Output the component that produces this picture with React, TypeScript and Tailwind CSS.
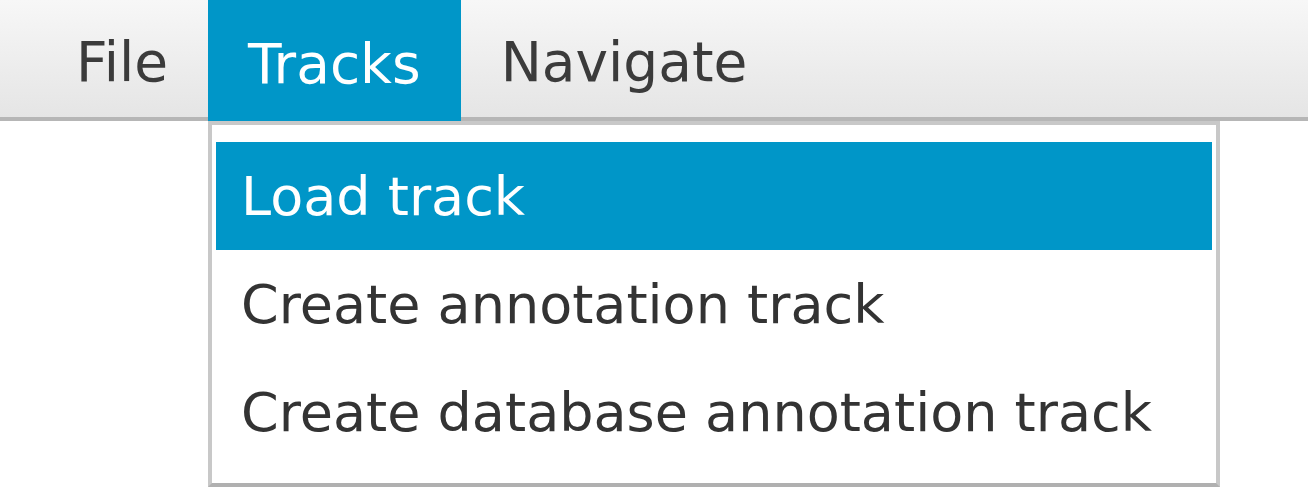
import React from "react";

const menus = ["File", "Tracks", "Navigate"];
const trackItems = [
  "Load track",
  "Create annotation track",
  "Create database annotation track",
];

const App: React.FC = () => {
  return (
    <div
      className="relative w-[1308px] h-[487px] bg-white overflow-hidden"
      style={{ fontFamily: '"DejaVu Sans", "Liberation Sans", sans-serif' }}
    >
      <div className="flex h-[121px] pl-[36px] bg-gradient-to-b from-[#f7f7f7] to-[#e5e5e5] border-b-4 border-[#b6b6b6]">
        {menus.map((m) => (
          <div
            key={m}
            className={
              m == "Tracks"
                ? "flex items-center px-[40px] pt-[7px] h-[121px] bg-[#0096c8] text-white text-[55px]"
                : "flex items-center px-[40px] pt-[7px] h-[117px] text-[#3b3b3b] text-[55px]"
            }
          >
            {m}
          </div>
        ))}
      </div>

      {/* dropdown */}
      <div className="absolute top-[121px] left-[208px] w-[1012px] h-[366px] bg-white border-4 border-[#c8c8c8] border-b-[#b0b0b0] pt-[17px] px-[4px]">
        {trackItems.map((item, i) => (
          <div
            key={item}
            className={
              i == 0
                ? "flex items-center h-[108px] pl-[25px] bg-[#0096c8] text-white text-[54px]"
                : "flex items-center h-[108px] pl-[25px] text-[#333333] text-[54px]"
            }
          >
            {item}
          </div>
        ))}
      </div>
    </div>
  );
};

export default App;
